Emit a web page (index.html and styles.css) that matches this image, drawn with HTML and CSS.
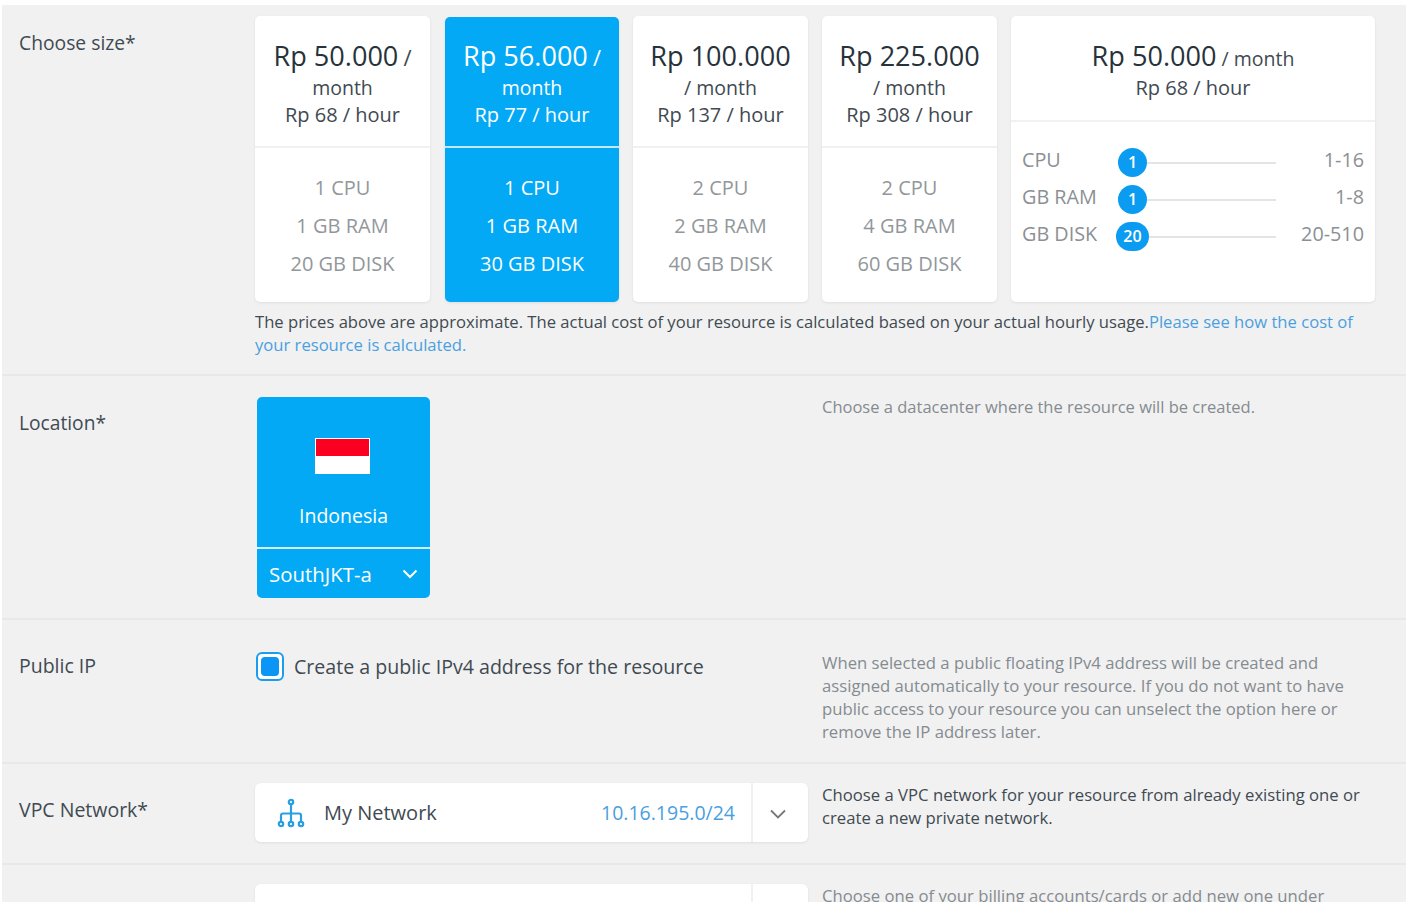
FILE: index.html
```html
<!DOCTYPE html>
<html lang="en">
<head>
    <meta charset="UTF-8" />
    <meta name="viewport" content="width=device-width, initial-scale=1.0" />
    <title>Create resource</title>
    <link rel="stylesheet" href="styles.css">
</head>
<body>
    <main class="panel">
        <!-- Size -->
        <section class="row row-size">
            <div class="row-label">Choose size*</div>
            <div class="row-wide">
                <div class="size-cards">
                    <div class="size-card">
                        <div class="size-head">
                            <span class="price">Rp 50.000</span> <span class="slash">/</span>
                            <div class="per">month</div>
                            <div class="hourly">Rp 68 / hour</div>
                        </div>
                        <div class="size-specs"><p>1 CPU</p><p>1 GB RAM</p><p>20 GB DISK</p></div>
                    </div>
                    <div class="size-card selected">
                        <div class="size-head">
                            <span class="price">Rp 56.000</span> <span class="slash">/</span>
                            <div class="per">month</div>
                            <div class="hourly">Rp 77 / hour</div>
                        </div>
                        <div class="size-specs"><p>1 CPU</p><p>1 GB RAM</p><p>30 GB DISK</p></div>
                    </div>
                    <div class="size-card">
                        <div class="size-head">
                            <span class="price">Rp 100.000</span>
                            <div class="per">/ month</div>
                            <div class="hourly">Rp 137 / hour</div>
                        </div>
                        <div class="size-specs"><p>2 CPU</p><p>2 GB RAM</p><p>40 GB DISK</p></div>
                    </div>
                    <div class="size-card">
                        <div class="size-head">
                            <span class="price">Rp 225.000</span>
                            <div class="per">/ month</div>
                            <div class="hourly">Rp 308 / hour</div>
                        </div>
                        <div class="size-specs"><p>2 CPU</p><p>4 GB RAM</p><p>60 GB DISK</p></div>
                    </div>
                    <div class="size-card custom">
                        <div class="size-head">
                            <span class="price">Rp 50.000</span> <span class="per">/ month</span>
                            <div class="hourly">Rp 68 / hour</div>
                        </div>
                        <div class="sliders">
                            <div class="slider-row">
                                <span class="slider-name">CPU</span>
                                <div class="slider-track"><span class="slider-knob">1</span></div>
                                <span class="slider-range">1-16</span>
                            </div>
                            <div class="slider-row">
                                <span class="slider-name">GB RAM</span>
                                <div class="slider-track"><span class="slider-knob">1</span></div>
                                <span class="slider-range">1-8</span>
                            </div>
                            <div class="slider-row">
                                <span class="slider-name">GB DISK</span>
                                <div class="slider-track"><span class="slider-knob wide">20</span></div>
                                <span class="slider-range">20-510</span>
                            </div>
                        </div>
                    </div>
                </div>
                <p class="size-note">The prices above are approximate. The actual cost of your resource is calculated based on your actual hourly usage.<a href="#">Please see how the cost of your resource is calculated.</a></p>
            </div>
        </section>

        <!-- Location -->
        <section class="row row-location">
            <div class="row-label">Location*</div>
            <div class="row-main">
                <div class="location-card">
                    <div class="location-body">
                        <svg class="flag" width="55" height="36" viewBox="0 0 55 36">
                            <rect width="55" height="36" fill="#fff"/>
                            <rect x="1" y="1" width="53" height="17" fill="#fb0020"/>
                        </svg>
                        <div>Indonesia</div>
                    </div>
                    <div class="location-zone">
                        <span>SouthJKT-a</span>
                        <svg width="16" height="10" viewBox="0 0 16 10"><path d="M1.5 1.5 8 8l6.5-6.5" fill="none" stroke="#fff" stroke-width="2"/></svg>
                    </div>
                </div>
            </div>
            <p class="row-help">Choose a datacenter where the resource will be created.</p>
        </section>

        <!-- Public IP -->
        <section class="row row-ip">
            <div class="row-label">Public IP</div>
            <div class="row-main">
                <label class="check">
                    <span class="check-box"><span class="check-mark"></span></span>
                    <span class="check-text">Create a public IPv4 address for the resource</span>
                </label>
            </div>
            <p class="row-help">When selected a public floating IPv4 address will be created and assigned automatically to your resource. If you do not want to have public access to your resource you can unselect the option here or remove the IP address later.</p>
        </section>

        <!-- VPC -->
        <section class="row row-vpc">
            <div class="row-label">VPC Network*</div>
            <div class="row-main">
                <div class="select">
                    <div class="select-value">
                        <svg class="network-icon" width="28" height="30" viewBox="0 0 28 30" fill="none" stroke="#2a9fe0" stroke-width="2.2">
                            <circle cx="14" cy="4" r="2.2"/>
                            <path d="M14 6.2V23M4 24v-6.5a2 2 0 0 1 2-2h16a2 2 0 0 1 2 2V24"/>
                            <circle cx="4" cy="26" r="2.2"/>
                            <circle cx="14" cy="26" r="2.2"/>
                            <circle cx="24" cy="26" r="2.2"/>
                        </svg>
                        <span class="select-name">My Network</span>
                        <span class="select-extra">10.16.195.0/24</span>
                    </div>
                    <div class="select-arrow">
                        <svg width="16" height="10" viewBox="0 0 16 10"><path d="M1 1.5 8 8.5l7-7" fill="none" stroke="#777" stroke-width="1.8"/></svg>
                    </div>
                </div>
            </div>
            <p class="row-help dark">Choose a VPC network for your resource from already existing one or create a new private network.</p>
        </section>

        <!-- Billing -->
        <section class="row row-billing">
            <div class="row-label"></div>
            <div class="row-main">
                <div class="select">
                    <div class="select-value"></div>
                    <div class="select-arrow"></div>
                </div>
            </div>
            <p class="row-help">Choose one of your billing accounts/cards or add new one under</p>
        </section>
    </main>
</body>
</html>
```

FILE: styles.css
```css
body {
    margin: 0;
    height: 902px;
    overflow: hidden;
    background-color: #ffffff;
    font-family: "Open Sans", "Noto Sans", sans-serif;
    color: #3f4a52;
}
p {
    margin: 0;
}
.panel {
    margin: 5px 10px 0 2px;
    background-color: #f1f1f1;
}
.row {
    display: flex;
    border-bottom: 2px solid #e8e8e8;
    box-sizing: border-box;
}
.row-size {
    height: 371px;
    padding-top: 11px;
}
.row-location {
    height: 244px;
    padding-top: 21px;
}
.row-ip {
    height: 144px;
    padding-top: 26px;
}
.row-vpc {
    height: 101px;
    padding-top: 19px;
}
.row-billing {
    padding-top: 19px;
    border-bottom: none;
}
.row-label {
    width: 236px;
    padding-left: 17px;
    flex-shrink: 0;
    font-size: 19.5px;
    line-height: 26px;
}
.row-size .row-label {
    padding-top: 14px;
    font-size: 19.3px;
}
.row-location .row-label {
    padding-top: 13px;
    font-size: 19.2px;
}
.row-ip .row-label {
    padding-top: 7px;
}
.row-vpc .row-label {
    padding-top: 14px;
}
.row-wide {
    flex: 1;
}
.row-main {
    width: 567px;
    flex-shrink: 0;
}
.row-help {
    width: 545px;
    font-size: 16.7px;
    line-height: 23px;
    color: #858b90;
}
.row-location .row-help {
    margin-top: -2px;
    font-size: 16.5px;
}
.row-ip .row-help {
    margin-top: 5px;
}
.row-help.dark {
    color: #3f4a52;
}

/* Size cards */
.size-cards {
    display: flex;
    gap: 14px;
}
.size-card {
    width: 175px;
    height: 286px;
    box-sizing: border-box;
    background-color: #ffffff;
    border-radius: 5px;
    box-shadow: 0 1px 3px rgba(0, 0, 0, 0.08);
    text-align: center;
    color: #3f4a52;
}
.size-card.selected {
    width: 174px;
    height: 285px;
    margin: 1px 0 0 1px;
    background-color: #03a9f4;
    color: #ffffff;
}
.size-card.custom {
    width: 364px;
}
.size-head {
    height: 132px;
    box-sizing: border-box;
    padding-top: 21px;
    border-bottom: 2px solid #f1f1f1;
    font-size: 19.5px;
    line-height: 27px;
}
.selected .size-head {
    height: 131px;
    padding-top: 20px;
    border-bottom-color: #bfe9fc;
}
.custom .size-head {
    height: 106px;
}
.price {
    font-size: 27.1px;
    line-height: 37px;
    color: #27323a;
}
.selected .price {
    color: #ffffff;
}
.slash {
    font-size: 22px;
    line-height: 27px;
}
.hourly {
    font-size: 20px;
}
.size-specs {
    padding-top: 21px;
    font-size: 20px;
    line-height: 38px;
    color: #92979b;
}
.selected .size-specs {
    color: #ffffff;
}
.size-note {
    margin-top: 8px;
    width: 1110px;
    font-size: 16.63px;
    line-height: 23px;
    color: #3f4a52;
}
.size-note a {
    color: #4a9fe0;
    text-decoration: none;
}

/* Sliders */
.sliders {
    padding: 19px 11px 0 11px;
}
.slider-row {
    display: flex;
    align-items: center;
    height: 37px;
    font-size: 19.8px;
    color: #8b9094;
}
.slider-name {
    width: 96px;
    text-align: left;
}
.slider-track {
    position: relative;
    width: 158px;
    height: 2px;
    margin-top: 6px;
    background-color: #e4e4e4;
}
.slider-knob {
    position: absolute;
    left: 0;
    top: -14px;
    width: 29px;
    height: 29px;
    border-radius: 50%;
    background-color: #0b9cf1;
    color: #ffffff;
    font-size: 16px;
    font-weight: 600;
    line-height: 29px;
    text-align: center;
}
.slider-knob.wide {
    left: -2px;
    width: 33px;
    border-radius: 15px;
}
.slider-range {
    flex: 1;
    text-align: right;
}

/* Location */
.location-card {
    width: 173px;
    height: 201px;
    margin-left: 2px;
    background-color: #03a9f4;
    border-radius: 5px;
    color: #ffffff;
    font-size: 19.5px;
}
.location-body {
    height: 152px;
    box-sizing: border-box;
    padding-top: 41px;
    text-align: center;
    border-bottom: 2px solid #d5f1fd;
}
.flag {
    display: block;
    margin: 0 0 28px 58px;
}
.location-zone {
    display: flex;
    justify-content: space-between;
    align-items: center;
    height: 49px;
    padding: 0 12px;
    font-size: 20.4px;
}

/* Checkbox */
.check {
    display: flex;
    align-items: center;
    gap: 10px;
    padding: 5px 0 0 1px;
    font-size: 19.6px;
    line-height: 30px;
}
.check-text {
    margin-top: 1px;
}
.check-box {
    display: flex;
    align-items: center;
    justify-content: center;
    width: 28px;
    height: 29px;
    box-sizing: border-box;
    border: 2px solid #1a9cf0;
    border-radius: 6px;
    background-color: #ffffff;
}
.check-mark {
    width: 18px;
    height: 19px;
    border-radius: 4px;
    background-color: #0b96f5;
}

/* Select */
.select {
    display: flex;
    width: 553px;
    height: 59px;
    background-color: #ffffff;
    border-radius: 6px;
    box-shadow: 0 1px 3px rgba(0, 0, 0, 0.08);
}
.select-value {
    flex: 1;
    display: flex;
    align-items: center;
    padding: 0 16px 0 22px;
    font-size: 19.5px;
}
.network-icon {
    margin-right: 19px;
}
.select-name {
    flex: 1;
    font-size: 20px;
}
.select-extra {
    color: #4a9fe0;
}
.select-arrow {
    display: flex;
    align-items: center;
    justify-content: center;
    width: 49px;
    padding: 2px 6px 0 0;
    border-left: 2px solid #f1f1f1;
}
```
